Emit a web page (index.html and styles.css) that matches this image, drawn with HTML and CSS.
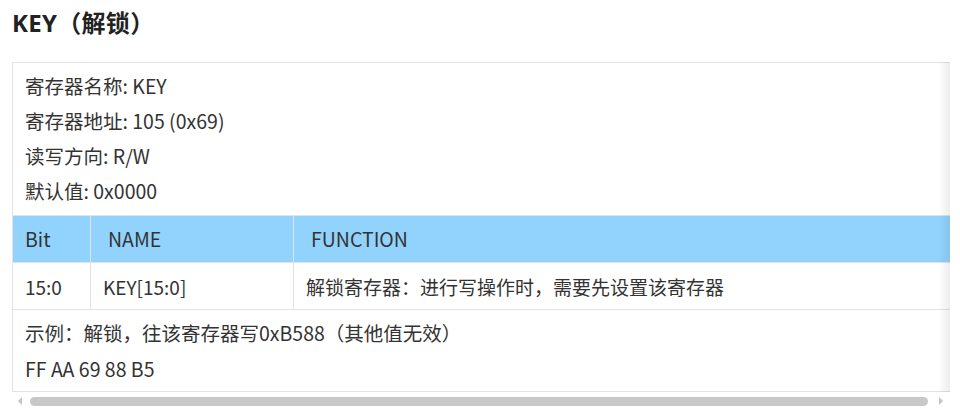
FILE: index.html
```html
<!DOCTYPE html>
<html lang="zh-CN">
<head>
<meta charset="utf-8">
<title>KEY（解锁）</title>
<link rel="stylesheet" href="styles.css">
</head>
<body>
<h1 class="title">KEY（解锁）</h1>
<div class="scroller">
  <div class="viewport">
    <table class="reg">
      <colgroup>
        <col class="c-bit"><col class="c-name"><col class="c-func">
      </colgroup>
      <tbody>
        <tr class="info">
          <td colspan="3">
            <p>寄存器名称: KEY</p>
            <p>寄存器地址: 105 (0x69)</p>
            <p>读写方向: R/W</p>
            <p>默认值: 0x0000</p>
          </td>
        </tr>
        <tr class="head">
          <th>Bit</th><th class="ind">NAME</th><th class="ind">FUNCTION</th>
        </tr>
        <tr class="data">
          <td>15:0</td><td>KEY[15:0]</td><td>解锁寄存器：进行写操作时，需要先设置该寄存器</td>
        </tr>
        <tr class="foot">
          <td colspan="3">
            <p>示例：解锁，往该寄存器写0xB588（其他值无效）</p>
            <p>FF AA 69 88 B5</p>
          </td>
        </tr>
      </tbody>
    </table>
    <div class="shade"></div>
  </div>
  <div class="hbar">
    <span class="arrow left"></span>
    <span class="thumb"></span>
    <span class="arrow right"></span>
  </div>
</div>
</body>
</html>
```
FILE: styles.css
```css
html, body {
  margin: 0;
  background: #fff;
}
body {
  padding: 0 10px 0 12px;
  font-family: "Noto Sans CJK SC", "Noto Sans", sans-serif;
  color: #333;
}
.title {
  margin: 0;
  padding-top: 8px;
  font-family: "Open Sans", "Noto Sans CJK SC", sans-serif;
  font-size: 24px;
  line-height: 30px;
  font-weight: 700;
  color: #222;
  letter-spacing: 0.3px;
}
.scroller {
  margin-top: 24px;
  width: 938px;
}
.viewport {
  position: relative;
  overflow: hidden;
  width: 938px;
}
.reg {
  border-collapse: collapse;
  width: 1000px;
  table-layout: fixed;
  font-size: 19.5px;
}
.c-bit { width: 78px; }
.c-name { width: 203px; }
.reg td, .reg th {
  border: 1px solid #e3e3e3;
  text-align: left;
  font-weight: 400;
  padding: 0 12px;
}
.reg p { margin: 0; }
.info td {
  padding-top: 5px;
  padding-bottom: 7px;
  line-height: 35px;
}
.head th {
  background: #91d3fd;
  height: 46px;
  line-height: 46px;
  padding-top: 0;
  padding-bottom: 0;
}
.head th.ind { padding-left: 17px; }
.data td {
  height: 46px;
  font-size: 19px;
}
.foot td {
  padding-top: 5px;
  padding-bottom: 4px;
  line-height: 36px;
}
.shade {
  position: absolute;
  top: 0;
  right: 0;
  bottom: 0;
  width: 12px;
  background: linear-gradient(to right, rgba(0,0,0,0), rgba(0,0,0,0.07));
}
.hbar {
  display: flex;
  align-items: center;
  height: 10px;
  margin-top: 4px;
  padding: 0 7px 0 6px;
}
.arrow {
  width: 0;
  height: 0;
  border-top: 4px solid transparent;
  border-bottom: 4px solid transparent;
}
.arrow.left { border-right: 4px solid #c4c4c4; }
.arrow.right { border-left: 4px solid #c4c4c4; }
.thumb {
  flex: 1;
  height: 9px;
  margin: 0 11px 0 8px;
  background: #c8c8c8;
  border-radius: 5px;
}
```
